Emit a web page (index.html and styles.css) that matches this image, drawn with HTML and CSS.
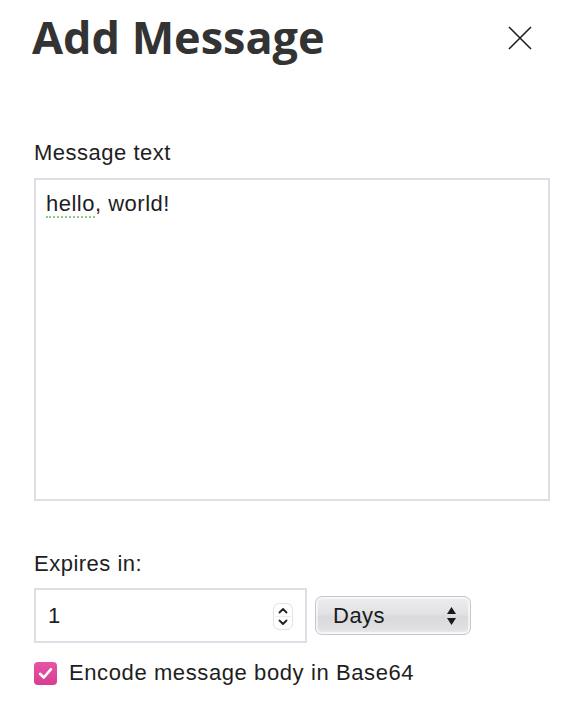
FILE: index.html
```html
<!DOCTYPE html>
<html lang="en">
<head>
<meta charset="utf-8">
<title>Add Message</title>
<link rel="stylesheet" href="styles.css">
</head>
<body>
<div class="dialog">
  <header class="dialog-header">
    <h1 class="dialog-title">Add Message</h1>
    <button class="close-btn" aria-label="Close">
      <svg width="24" height="24" viewBox="0 0 24 24"><path d="M1 1 L23 23 M23 1 L1 23" stroke="#1f1f1f" stroke-width="1.6" fill="none"/></svg>
    </button>
  </header>

  <div class="field field-message">
    <label class="field-label">Message text</label>
    <div class="text-area" role="textbox" aria-multiline="true"><span class="spell">hello</span>, world!</div>
  </div>

  <div class="field field-expires">
    <label class="field-label">Expires in:</label>
    <div class="expires-row">
      <div class="number-input">
        <span class="number-value">1</span>
        <span class="spinner">
          <svg width="20" height="27" viewBox="0 0 20 27">
            <rect x="0.5" y="0.5" width="19" height="26" rx="6" fill="#fff" stroke="#e3e3e6"/>
            <line x1="2" y1="13.5" x2="18" y2="13.5" stroke="#ececef" stroke-width="1"/>
            <path d="M6.5 9.5 L10 6 L13.5 9.5" stroke="#222" stroke-width="1.8" fill="none" stroke-linecap="round" stroke-linejoin="round"/>
            <path d="M6.5 17.5 L10 21 L13.5 17.5" stroke="#222" stroke-width="1.8" fill="none" stroke-linecap="round" stroke-linejoin="round"/>
          </svg>
        </span>
      </div>
      <div class="select">
        <span class="select-value">Days</span>
        <svg class="select-arrows" width="11" height="22" viewBox="0 0 11 22">
          <path d="M1 9 L5.5 2 L10 9 Z" fill="#1a1a1a"/>
          <path d="M1 13 L5.5 20 L10 13 Z" fill="#1a1a1a"/>
        </svg>
      </div>
    </div>
  </div>

  <div class="check-row">
    <span class="checkbox">
      <svg width="15" height="13" viewBox="0 0 15 13"><path d="M2 6.8 L5.8 10.5 L13 2.2" stroke="#fff" stroke-width="2.6" fill="none" stroke-linecap="round" stroke-linejoin="round"/></svg>
    </span>
    <span class="check-label">Encode message body in Base64</span>
  </div>
</div>
</body>
</html>
```

FILE: styles.css
```css
* { box-sizing: border-box; }

html, body {
  margin: 0;
  padding: 0;
  background: #ffffff;
}

body {
  font-family: "Liberation Sans", Arial, sans-serif;
  color: #1e1e1e;
}

.dialog {
  padding: 13px 24px 0 34px;
}

.dialog-header {
  display: flex;
  align-items: center;
  justify-content: space-between;
  margin-right: 18px;
  height: 48px;
}

.dialog-title {
  margin: 0 0 0 -2px;
  font-family: "Open Sans", "Noto Sans", sans-serif;
  font-weight: 700;
  font-size: 45px;
  line-height: 48px;
  color: #333333;
  letter-spacing: 0px;
}

.close-btn {
  display: flex;
  padding: 0;
  border: 0;
  background: transparent;
  margin-top: 2px;
}

.field-label {
  display: block;
  font-size: 22px;
  line-height: 26px;
  letter-spacing: 0.5px;
  color: #1e1e1e;
}

.field-message {
  margin-top: 79px;
}

.text-area {
  margin-top: 12px;
  width: 516px;
  height: 323px;
  border: 2px solid #dcdfe5;
  padding: 11px 10px;
  font-size: 22px;
  line-height: 26px;
  letter-spacing: 0.5px;
  color: #1e1e1e;
}

.spell {
  border-bottom: 2px dotted #8fcb84;
}

.field-expires {
  margin-top: 50px;
}

.expires-row {
  margin-top: 11px;
  display: flex;
  align-items: center;
  gap: 8px;
}

.number-input {
  width: 273px;
  height: 55px;
  border: 2px solid #dcdfe5;
  display: flex;
  align-items: center;
  justify-content: space-between;
  padding: 0 12px 0 12px;
}

.number-value {
  font-size: 22px;
  letter-spacing: 0.5px;
}

.spinner {
  display: flex;
  margin-top: 2px;
  filter: drop-shadow(0 0.5px 0.5px rgba(0,0,0,0.12));
}

.select {
  width: 156px;
  height: 39px;
  border: 1px solid #c4c7ce;
  border-radius: 7px;
  background: linear-gradient(#eeeef0 0%, #e2e2e5 45%, #d9d9dc 55%, #e4e4e7 100%);
  box-shadow: inset 0 0 0 2px rgba(255,255,255,0.55), inset 0 -2px 3px rgba(255,255,255,0.5);
  display: flex;
  align-items: center;
  justify-content: space-between;
  padding: 0 13px 0 17px;
}

.select-value {
  font-size: 22px;
  letter-spacing: 0.5px;
  color: #1a1a1a;
}

.select-arrows {
  display: block;
}

.check-row {
  margin-top: 17px;
  display: flex;
  align-items: center;
  gap: 12px;
}

.checkbox {
  width: 23px;
  height: 23px;
  border-radius: 4px;
  background: linear-gradient(#e655a5, #d83c90);
  display: flex;
  align-items: center;
  justify-content: center;
}

.check-label {
  font-size: 22px;
  line-height: 26px;
  letter-spacing: 0.6px;
  color: #1e1e1e;
}
```
